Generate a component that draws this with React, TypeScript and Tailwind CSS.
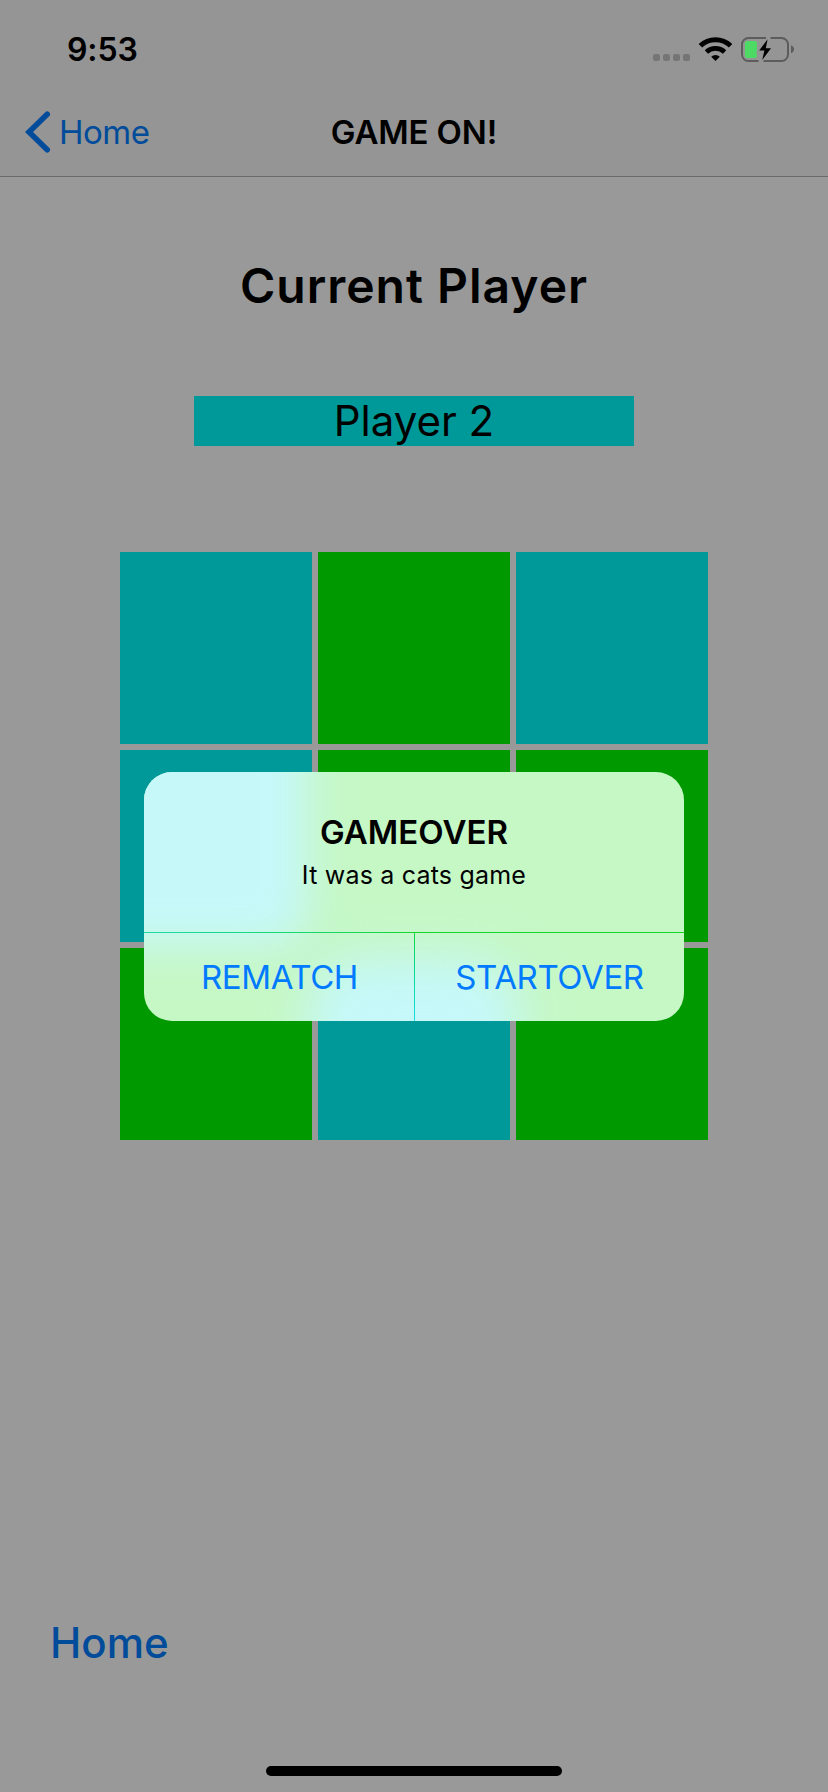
const TEAL = "bg-[#009999]";
const GREEN = "bg-[#009900]";
const board = [TEAL, GREEN, TEAL, TEAL, GREEN, GREEN, GREEN, TEAL, GREEN];

function StatusIcons() {
  return (
    <svg width="146" height="32" viewBox="650 34 146 32" className="block">
      {[653, 663, 673, 683].map((x) => (
        <rect key={x} x={x} y="54" width="7" height="7" rx="2.2" fill="#757575" />
      ))}
      <g fill="none" stroke="#000">
        <path d="M700.4 45.8 A22 22 0 0 1 730.6 45.8" strokeWidth="5" />
        <path d="M706.4 51.9 A13.5 13.5 0 0 1 724.6 51.9" strokeWidth="4.8" />
      </g>
      <path d="M715.5 61 L711.2 56.8 A6.2 6.2 0 0 1 719.8 56.8 Z" fill="#000" />
      <path
        d="M758.5 61 H748.5 A6.5 6.5 0 0 1 742 54.5 V44.5 A6.5 6.5 0 0 1 748.5 38 H766 M770.5 38 H781.5 A6.5 6.5 0 0 1 788 44.5 V54.5 A6.5 6.5 0 0 1 781.5 61 H763.5"
        fill="none"
        stroke="#5c5c5c"
        strokeWidth="2"
      />
      <path d="M791 45.2 C795 46.6 795 51.8 791 53.2 Z" fill="#5c5c5c" />
      <path
        d="M747.5 41 H755 Q757 41 757 43 V51 L755.8 53 L757 54 V56 Q757 58 755 58 H747.5 Q745 58 745 55.5 V43.5 Q745 41 747.5 41 Z"
        fill="#4cd964"
      />
      <path d="M767.6 39.2 L759.2 50.4 H764.4 L762.2 60 L771 48.2 H765.8 Z" fill="#000" />
    </svg>
  );
}

function NavBar() {
  return (
    <header className="h-[177px] border-b border-[#6b6b6b] bg-[#959595]">
      <div className="flex h-[88px] items-start justify-between pl-[67px] pr-8">
        <span className="mt-[30px] text-[32px] leading-[40px] font-semibold tracking-[-0.1px]">9:53</span>
        <div className="mt-[34px]">
          <StatusIcons />
        </div>
      </div>
      <div className="grid h-[88px] grid-cols-3 items-center">
        <button className="flex items-center pl-[25px] text-[#004c9a]">
          <svg width="26" height="44" viewBox="0 0 26 44" fill="none" className="shrink-0">
            <path
              d="M22.2 4.2 L4 22 L22.2 39.8"
              stroke="currentColor"
              strokeWidth="5.6"
              strokeLinecap="round"
              strokeLinejoin="miter"
            />
          </svg>
          <span className="ml-[8px] text-[33px] leading-[40px] tracking-[-0.5px]">Home</span>
        </button>
        <h1 className="text-center text-[33px] leading-[40px] font-semibold whitespace-nowrap tracking-[-0.15px]">
          GAME ON!
        </h1>
      </div>
    </header>
  );
}

function AlertBackdrop() {
  return (
    <div className="absolute inset-0 overflow-hidden bg-[#c6f8c6]">
      <div className="absolute -top-[200px] -left-[200px] h-[373px] w-[363px] rounded-[30px] bg-[#c6f8fa] blur-[22px]" />
      <div className="absolute top-[186px] left-[166px] h-[200px] w-[208px] rounded-[50px] bg-[#c6f8fa] blur-[24px]" />
    </div>
  );
}

function Alert() {
  return (
    <div
      role="alertdialog"
      className="absolute top-[772px] left-[144px] flex h-[249px] w-[540px] flex-col overflow-hidden rounded-[28px]"
    >
      <AlertBackdrop />
      <div className="relative flex h-[160px] flex-col items-center pt-[40px]">
        <h2 className="text-[33px] leading-[40px] font-semibold tracking-[0.05px]">GAMEOVER</h2>
        <p className="mt-[7px] text-[25px] leading-[32px] tracking-[0.2px]">It was a cats game</p>
      </div>
      <div className="relative h-px bg-linear-to-r from-[#1bdba0] via-[#18d860] via-35% to-[#14d828] to-50%" />
      <div className="relative flex h-[88px] text-[33px] leading-[40px] text-[#007aff]">
        <button className="w-[270px] pl-px tracking-[-0.4px]">REMATCH</button>
        <div className="w-px bg-linear-to-b from-[#14d83c] to-[#1bdbe0]" />
        <button className="w-[269px] tracking-[-0.4px]">STARTOVER</button>
      </div>
    </div>
  );
}

export default function App() {
  return (
    <div className="relative flex h-[1792px] w-[828px] flex-col overflow-hidden bg-[#999999] font-['Inter','Liberation_Sans',sans-serif] text-black">
      <NavBar />
      <main className="flex flex-1 flex-col items-center">
        <h2 className="mt-[79px] text-[48px] leading-[60px] font-semibold tracking-[1px]">Current Player</h2>
        <div className="mt-[80px] flex h-[50px] w-[440px] items-center justify-center bg-[#009999] text-[42px] leading-[50px] font-normal">
          Player 2
        </div>
        <div className="mt-[106px] grid grid-cols-3 gap-[6px]">
          {board.map((color, i) => (
            <div key={i} className={`size-[192px] ${color}`} />
          ))}
        </div>
        <button className="mt-[478px] ml-[50px] self-start text-[42px] leading-[50px] font-medium text-[#004c9a]">
          Home
        </button>
      </main>
      <div className="mb-[16px] h-[10px] w-[296px] self-center rounded-full bg-black" />
      <Alert />
    </div>
  );
}
